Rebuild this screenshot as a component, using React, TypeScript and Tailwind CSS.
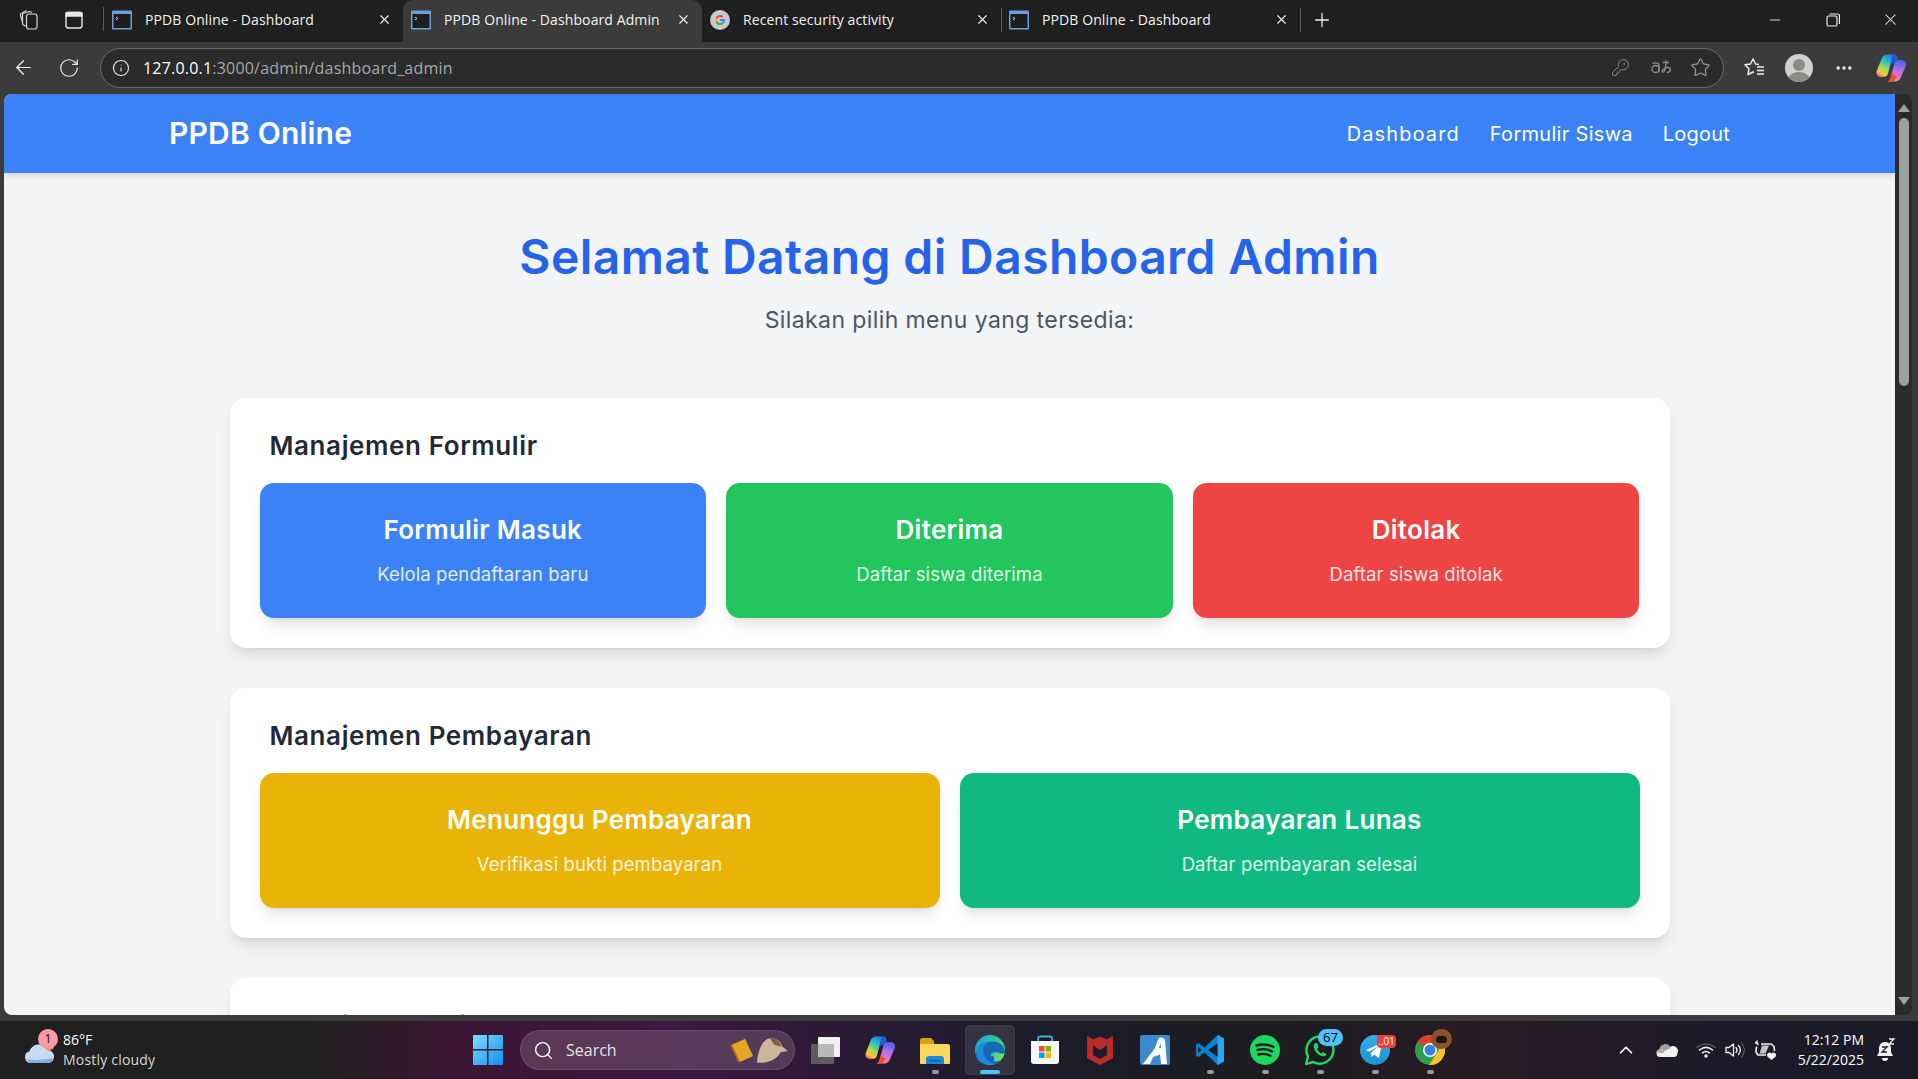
import React from 'react';
import { ArrowLeft, RotateCw, Info, X, Plus, Minus, Star, KeyRound, Search, ChevronUp, MoreHorizontal } from 'lucide-react';

const UI_FONT = { fontFamily: '"Open Sans", "Noto Sans", sans-serif' };

function TerminalFavicon() {
  return (
    <svg width="20" height="20" viewBox="0 0 20 20" className="shrink-0">
      <rect x="0" y="0.5" width="20" height="19" rx="1" fill="#6a9fd8" />
      <rect x="1.5" y="4" width="17" height="14" fill="#1d1d1d" />
      <path d="M4 7l2 1.5L4 10" stroke="#ddd" strokeWidth="1" fill="none" />
    </svg>
  );
}

function GoogleFavicon() {
  return (
    <svg width="20" height="20" viewBox="0 0 20 20" className="shrink-0">
      <circle cx="10" cy="10" r="10" fill="#c9c9c9" />
      <path d="M10 5a5 5 0 0 1 3.4 1.3l-1.4 1.4A3 3 0 0 0 7.2 9L5.6 7.6A5 5 0 0 1 10 5z" fill="#e94235" />
      <path d="M5.6 7.6L7.2 9a3 3 0 0 0 0 2L5.6 12.4a5 5 0 0 1 0-4.8z" fill="#f9bb05" />
      <path d="M5.6 12.4L7.2 11a3 3 0 0 0 4.6 1.5l1.5 1.3A5 5 0 0 1 5.6 12.4z" fill="#34a853" />
      <path d="M15 10c0 1.6-.6 2.9-1.7 3.8l-1.5-1.3c.5-.4.8-.9 1-1.500H10V9h4.9c.1.3.1.7.1 1z" fill="#4285f4" />
    </svg>
  );
}

function CopilotIcon({ size = 30, id = 'cp' }: { size?: number; id?: string }) {
  return (
    <svg width={size} height={size} viewBox="0 0 30 30">
      <defs>
        <linearGradient id={`${id}A`} x1="0.7" y1="0" x2="0.2" y2="1">
          <stop offset="0" stopColor="#1a7fe8" />
          <stop offset="0.35" stopColor="#2cc7c0" />
          <stop offset="0.65" stopColor="#b5d94a" />
          <stop offset="0.85" stopColor="#f7c53c" />
          <stop offset="1" stopColor="#ee5f9a" />
        </linearGradient>
        <linearGradient id={`${id}B`} x1="0.6" y1="0" x2="0.4" y2="1">
          <stop offset="0" stopColor="#4a63ea" />
          <stop offset="0.4" stopColor="#a86ee8" />
          <stop offset="0.8" stopColor="#ee78c8" />
          <stop offset="1" stopColor="#f6a06a" />
        </linearGradient>
      </defs>
      <path d="M11 1.500h8.500c-2 .5-3 2-3.500 4l-4 15c-.7 2.600-2.400 3.500-4.500 3.500H5c-3.500 0-5.300-2.700-4.300-6L5.500 6C6.500 3 8.500 1.500 11 1.500z" fill={`url(#${id}A)`} />
      <path d="M19 28.500h-8c2 0 3-1.500 3.500-3.500l4-14.500c.7-2.600 2.400-3.500 4.500-3.500h2.500c3.500 0 5.300 2.700 4.300 6L25 24c-1 3-3.500 4.500-6 4.500z" fill={`url(#${id}B)`} />
      <path d="M19.500 1.500c-2 .5-3 2-3.500 4l-2.500 9c.5-2 1.500-3.500 3.500-4.500l2-.5c.5-2 1.800-2 2.700-2-.2-3-.7-6-2.200-6z" fill="#2456d8" />
      <path d="M11 28.500c2 0 3-1.500 3.500-3.500l1.500-6c1 2.500 2.500 4 5 4l-1.500 3c-.8 1.500-2 2.500-3.500 2.500z" fill="#ef4d36" />
    </svg>
  );
}

function WindowsLogo() {
  return (
    <svg width="30" height="30" viewBox="0 0 30 30">
      <defs>
        <linearGradient id="winG" x1="0" y1="0" x2="1" y2="1">
          <stop offset="0" stopColor="#7fdcff" />
          <stop offset="1" stopColor="#0f8ff0" />
        </linearGradient>
      </defs>
      <path d="M0 1a1 1 0 0 1 1-1h13v14H0zM15.500 0H29a1 1 0 0 1 1 1v13H15.500zM0 15.500h14V30H1a1 1 0 0 1-1-1zM15.500 15.500H30V29a1 1 0 0 1-1 1H15.500z" fill="url(#winG)" />
    </svg>
  );
}

function TaskViewIcon() {
  return (
    <svg width="30" height="30" viewBox="0 0 30 30">
      <rect x="1" y="9" width="23" height="20" rx="1" fill="#5c5c5c" />
      <rect x="8" y="2" width="22" height="20" rx="1" fill="#f2f2f2" />
      <rect x="8" y="9" width="16" height="13" fill="#b8b8b8" />
    </svg>
  );
}

function ExplorerIcon() {
  return (
    <svg width="30" height="30" viewBox="0 0 30 30">
      <path d="M0 5a2 2 0 0 1 2-2h9l3 3v4H0z" fill="#d9a00f" />
      <path d="M0 9h28a2 2 0 0 1 2 2v17a1 1 0 0 1-1 1H1a1 1 0 0 1-1-1z" fill="#fdd75a" />
      <path d="M6 29v-5a3 3 0 0 1 3-3h12a3 3 0 0 1 3 3v5z" fill="#1e88d8" />
      <rect x="9" y="25" width="12" height="1.5" fill="#0c5fa6" />
    </svg>
  );
}

function EdgeIcon() {
  return (
    <svg width="30" height="30" viewBox="0 0 30 30">
      <defs>
        <linearGradient id="edgeA" x1="0" y1="0" x2="1" y2="0.6">
          <stop offset="0" stopColor="#1b9de2" />
          <stop offset="0.6" stopColor="#30c5a0" />
          <stop offset="1" stopColor="#6fe06a" />
        </linearGradient>
      </defs>
      <circle cx="15" cy="15" r="15" fill="url(#edgeA)" />
      <path d="M30 17c-.5-7-6-10.500-12-10.500C9 6.500 3 11 1 18c-2 6 5 12 14 12 5 0 9-2 11-5-3 1.500-6 1.500-8 .5 3-1 1-5-2-5-1-2 3-4 7-3 3 1 5 2 7 0z" fill="#1568b8" />
      <path d="M2 14C4 8 10 6 15 7c-5 1-8 5-7 10 1 6 6 11 12 12-2 1-3 1-5 1C6 30 0 23 2 14z" fill="#1b8be0" />
    </svg>
  );
}

function StoreIcon() {
  return (
    <svg width="30" height="30" viewBox="0 0 30 30">
      <path d="M8 8V3.500a2 2 0 0 1 2-2h10a2 2 0 0 1 2 2V8" fill="none" stroke="#2eb6ea" strokeWidth="1.8" />
      <path d="M1 6h28v20a3 3 0 0 1-3 3H4a3 3 0 0 1-3-3z" fill="#f7f7f7" />
      <rect x="9" y="11" width="5.5" height="5.5" fill="#f25022" />
      <rect x="15.5" y="11" width="5.5" height="5.5" fill="#7fba00" />
      <rect x="9" y="17.5" width="5.5" height="5.5" fill="#00a4ef" />
      <rect x="15.5" y="17.5" width="5.5" height="5.5" fill="#ffb900" />
    </svg>
  );
}

function McAfeeIcon() {
  return (
    <svg width="30" height="30" viewBox="0 0 30 30">
      <path d="M2 1l6.500 3.500L15 1.500l6.500 3L28 1v22l-13 7-13-7zM8 10.500V20l7 4 7-4v-9.500L15 15z" fill="#b92c29" fillRule="evenodd" />
    </svg>
  );
}

function AppAIcon() {
  return (
    <svg width="30" height="30" viewBox="0 0 30 30">
      <rect width="30" height="30" rx="2" fill="#3b8acb" />
      <path d="M3 29l9-12 3-4c1-3 2-7 4-10 3-1 5 0 6 2l2 24h-7l-1-9-6 2-3 7z" fill="#fff" />
      <path d="M19 13l1.500-5 .5 5zM17 22l3-3 1 10h-3z" fill="#3b8acb" />
    </svg>
  );
}

function VscodeIcon() {
  return (
    <svg width="30" height="30" viewBox="0 0 30 30">
      <path d="M29 3.500L22.500 0 9.500 12.500 3.500 8 1 9.500v11L3.500 22l6-4.500L22.500 30l6.500-3.500z" fill="#0b7fcc" />
      <path d="M22.500 0L29 3.500v23L22.500 30z" fill="#2aa5f0" />
      <path d="M22.500 8.500L13 15l9.500 6.500z" fill="#1c1c20" />
      <path d="M3 12l3.500 3L3 18z" fill="#1c1c20" />
    </svg>
  );
}

function SpotifyIcon() {
  return (
    <svg width="30" height="30" viewBox="0 0 30 30">
      <circle cx="15" cy="15" r="15" fill="#1ed760" />
      <path d="M6.500 10.500c6-1.800 12-1.200 17 1.500M7.500 15c5-1.400 10.500-.8 14.500 1.500M8.500 19.500c4-1 8.500-.7 12 1.200" fill="none" stroke="#1b1b1f" strokeWidth="2.4" strokeLinecap="round" />
    </svg>
  );
}

function WhatsappIcon() {
  return (
    <svg width="30" height="30" viewBox="0 0 30 30">
      <path d="M1 29l2-7.500A13.500 13.500 0 1 1 8.500 27z" fill="none" stroke="#25d366" strokeWidth="2.4" strokeLinejoin="round" />
      <path d="M10.500 8c-2 1-2.500 3.500-1 6.500 1.500 3 4 5.500 7 6.500 2.500.8 4.500 0 5-2l-3.500-2-1.500 1.500c-2-.8-3.500-2.500-4.500-4.500L13.500 12l-1.500-4z" fill="#25d366" />
    </svg>
  );
}

function TelegramIcon() {
  return (
    <svg width="30" height="30" viewBox="0 0 30 30">
      <defs>
        <linearGradient id="tgG" x1="0.5" y1="0" x2="0.5" y2="1">
          <stop offset="0" stopColor="#38aee8" />
          <stop offset="1" stopColor="#1c8fd0" />
        </linearGradient>
      </defs>
      <circle cx="15" cy="15" r="15" fill="url(#tgG)" />
      <path d="M6 15l16-7-3 15-5-3.500-2.500 2.500-.5-4.500 7-6-9 5z" fill="#fff" />
    </svg>
  );
}

function ChromeIcon() {
  return (
    <svg width="30" height="30" viewBox="0 0 30 30">
      <circle cx="15" cy="15" r="15" fill="#2f9e4f" />
      <path d="M15 0a15 15 0 0 1 13 7.500H15a7.500 7.500 0 0 0-6.500 3.750L2.500 6.700A15 15 0 0 1 15 0z" fill="#e33b2e" />
      <path d="M28 7.500A15 15 0 0 1 14 30l7.500-11.250A7.500 7.500 0 0 0 21.500 7.500z" fill="#fbc02d" />
      <circle cx="15" cy="15" r="7" fill="#fff" />
      <circle cx="15" cy="15" r="5.500" fill="#3b82e0" />
    </svg>
  );
}

function WeatherIcon() {
  return (
    <svg width="32" height="24" viewBox="0 0 32 24" className="mt-[2px]">
      <rect x="17" y="1" width="13" height="10" rx="4" fill="#f08a24" />
      <path d="M7 24a6 6 0 0 1-1.500-11.800C7 8 11 5 15 5.500c3.500.3 6.500 2.500 7.500 5.500a6.500 6.500 0 0 1 2 13z" fill="#c4dbf7" />
      <path d="M3 20c3 1 8 1.500 12 1s9-1 14-2a6 6 0 0 1-5 5H7a6 6 0 0 1-4-4z" fill="#86aae6" />
    </svg>
  );
}

function OneDriveIcon() {
  return (
    <svg width="22" height="16" viewBox="0 0 22 16">
      <path d="M4 15a3.800 3.800 0 0 1-.5-7.500A6 6 0 0 1 14.500 5 4.800 4.800 0 0 1 21.500 11c0 2.500-1.500 4-3.500 4z" fill="#f2f2f2" />
      <path d="M3.500 7.500A6 6 0 0 1 14.500 5l-1.500 2a5 5 0 0 0-4 1.500A5 5 0 0 0 7 8c-1.300-.8-2.400-.8-3.500-.5z" fill="#9e9e9e" />
      <path d="M13 7a5 5 0 0 0-4 1.500L7 8C5.700 7.200 4.600 7.200 3.500 7.500 1 8 .3 10 .3 11L7 11c2-2 4-3.500 6-4z" fill="#b0b0b0" />
    </svg>
  );
}

function WifiArcsIcon() {
  return (
    <svg width="20" height="16" viewBox="0 0 20 16" fill="none" strokeLinecap="round">
      <path d="M1 5.500C6 1 14 1 19 5.500" stroke="#5e5e66" strokeWidth="1.4" />
      <path d="M3.500 8c4-3.300 9-3.300 13 0" stroke="#f2f2f2" strokeWidth="1.6" />
      <path d="M6.500 10.800c2.200-1.700 4.800-1.700 7 0" stroke="#f2f2f2" strokeWidth="1.6" />
      <circle cx="10" cy="14" r="1.700" fill="#f2f2f2" />
    </svg>
  );
}

function VolumeIcon() {
  return (
    <svg width="21" height="18" viewBox="0 0 21 18" fill="none" strokeLinecap="round">
      <path d="M1 6.500h3L8.500 3v12L4 11.500H1z" stroke="#f2f2f2" strokeWidth="1.3" strokeLinejoin="round" />
      <path d="M11 6.500c1.300 1.500 1.300 3.500 0 5M13.500 4.500c2.300 2.700 2.300 6.300 0 9" stroke="#f2f2f2" strokeWidth="1.3" />
      <path d="M16.500 2c3.500 4.300 3.500 9.700 0 14" stroke="#5e5e66" strokeWidth="1.1" />
    </svg>
  );
}

function SyncBatteryIcon() {
  return (
    <svg width="22" height="22" viewBox="0 0 22 22" fill="none" stroke="#f2f2f2" strokeWidth="1.6">
      <path d="M1.500 7.500L1 13l2 3h2" />
      <path d="M0 4l2-2.500L3.500 6z" fill="#f2f2f2" strokeWidth="0.6" />
      <path d="M6 5h10l3 2.500.5 4.500M5 16h6" />
      <path d="M7 6.500L4.500 14.500h6L14 6.500z" fill="#c6c6c6" stroke="none" />
      <path d="M16.500 21l-4.200-3.600a2.500 2.500 0 0 1 4.200-2.700 2.500 2.500 0 0 1 4.200 2.700z" fill="#f2f2f2" stroke="none" />
    </svg>
  );
}

function QuietBellIcon() {
  return (
    <svg width="20" height="24" viewBox="0 0 20 24">
      <path d="M9 4c-4 0-6 3-6 7v3l-2 4h16l-2-4v-3c0-4-2-7-6-7z" fill="#f2f2f2" />
      <path d="M6 20h6a3 3 0 0 1-6 0z" fill="#f2f2f2" />
      <path d="M6 9h5l-5 5h5" fill="none" stroke="#1b1825" strokeWidth="1.3" />
      <path d="M13 1h5l-5 5h5" fill="none" stroke="#f2f2f2" strokeWidth="1.3" />
    </svg>
  );
}

function WorkspacesIcon() {
  return (
    <svg width="22" height="22" viewBox="0 0 22 22" fill="none" stroke="#d6d6d6" strokeWidth="1.2">
      <rect x="8.500" y="5" width="10.500" height="15" rx="2.500" />
      <path d="M8.500 17.500L5.500 16a2 2 0 0 1-1-2V6a2 2 0 0 1 2-2l5-1.500a2 2 0 0 1 2 1.500" />
      <path d="M4.500 13L2.500 6.500A2 2 0 0 1 4 4L8.500 1.500" />
    </svg>
  );
}

function VerticalTabsIcon() {
  return (
    <svg width="20" height="20" viewBox="0 0 20 20" fill="none" stroke="#e6e6e6" strokeWidth="1.4">
      <rect x="2" y="2.500" width="16" height="15.500" rx="2.500" />
      <path d="M2 3.500a1 1 0 0 1 1-1h14a1 1 0 0 1 1 1V6H2z" fill="#e6e6e6" />
    </svg>
  );
}

function TranslateIcon() {
  return (
    <svg width="22" height="20" viewBox="0 0 22 20" fill="none" stroke="#8f8f8f" strokeWidth="1.3">
      <circle cx="5.500" cy="11" r="3.500" />
      <path d="M2.500 5.500c2-1 6-1 6.500 1.500v7.500" />
      <path d="M13 4.500h6M16 2.500c0 5-1 9-2 11-1 1.500-2.500.5-1.500-1.500 1-1.500 4-3 6-2.500 2 .5 2.500 3 1 4-.5.5-1.500 1-2.500 1" />
    </svg>
  );
}

function FavoritesIcon() {
  return (
    <svg width="22" height="22" viewBox="0 0 22 22" fill="none" stroke="#f0f0f0" strokeWidth="1.4" strokeLinejoin="round">
      <path d="M15 7.500l-3.500-.5L9 2 6.500 7 1 7.800l4 3.900L4 17.500 9 15l1 .5" />
      <path d="M13 10h7M13 13.500h7M13 17h7" />
    </svg>
  );
}

function ProfileIcon() {
  return (
    <svg width="28" height="28" viewBox="0 0 28 28">
      <clipPath id="avatarClip">
        <circle cx="14" cy="14" r="14" />
      </clipPath>
      <g clipPath="url(#avatarClip)">
        <rect width="28" height="28" fill="#d2d1cd" />
        <circle cx="14" cy="11" r="6" fill="#8c8b87" />
        <ellipse cx="14" cy="26" rx="11" ry="8" fill="#8c8b87" />
      </g>
    </svg>
  );
}

const tabs = [
  { title: 'PPDB Online - Dashboard', icon: <TerminalFavicon />, active: false, divider: false },
  { title: 'PPDB Online - Dashboard Admin', icon: <TerminalFavicon />, active: true, divider: false },
  { title: 'Recent security activity', icon: <GoogleFavicon />, active: false, divider: true },
  { title: 'PPDB Online - Dashboard', icon: <TerminalFavicon />, active: false, divider: true },
];

function BrowserTab({ title, icon, active, divider }: { title: string; icon: React.ReactNode; active: boolean; divider: boolean }) {
  return (
    <div className={`relative flex h-[42px] w-[299px] shrink-0 items-center pb-[3px] pl-[8px] pr-[11px] ${active ? 'rounded-t-[10px] bg-[#3b3b3b]' : ''}`}>
      {icon}
      <span className="ml-[13px] flex-1 truncate text-[14px] tracking-[0.1px] text-[#f2f2f2]">{title}</span>
      <X size={15} className="text-[#f2f2f2]" strokeWidth={1.8} />
      {divider && <div className="absolute right-[-1px] top-[8px] h-[24px] w-px bg-[#5a5a5a]" />}
    </div>
  );
}

function TabStrip() {
  return (
    <div className="flex h-[42px] shrink-0 items-center bg-[#1f1f1f]">
      <div className="flex w-[103px] shrink-0 items-center pb-[3px] pl-[18px]">
        <WorkspacesIcon />
        <div className="ml-[24px]"><VerticalTabsIcon /></div>
      </div>
      <div className="mb-[4px] h-[24px] w-px bg-[#5a5a5a]" />
      {tabs.map((t, i) => (
        <BrowserTab key={i} {...t} />
      ))}
      <Plus size={22} strokeWidth={1.4} className="mb-[3px] ml-[11px] text-[#f0f0f0]" />
      <div className="ml-auto flex items-center pb-[3px]">
        <div className="flex w-[58px] justify-center"><Minus size={16} strokeWidth={1.3} className="text-[#f0f0f0]" /></div>
        <div className="flex w-[58px] justify-center">
          <svg width="14" height="14" viewBox="0 0 14 14" fill="none" stroke="#f0f0f0" strokeWidth="1.2">
            <rect x="1" y="3" width="10" height="10" rx="1.5" />
            <path d="M3.500 1h8a2 2 0 0 1 2 2v8" />
          </svg>
        </div>
        <div className="flex w-[56px] justify-center"><X size={19} strokeWidth={1.3} className="text-[#f0f0f0]" /></div>
      </div>
    </div>
  );
}

function Toolbar() {
  return (
    <div className="flex h-[52px] shrink-0 items-center bg-[#3b3b3b] pb-[1px]">
      <div className="flex w-[46px] justify-center"><ArrowLeft size={23} strokeWidth={1.3} className="text-[#f0f0f0]" /></div>
      <div className="flex w-[45px] justify-center"><RotateCw size={22} strokeWidth={1.3} className="text-[#f0f0f0]" /></div>
      <div className="ml-[9px] flex h-[40px] w-[1624px] shrink-0 items-center rounded-full border border-[#6a6a6a] bg-[#2b2b2b] pl-[11px] pr-[12px]">
        <Info size={18} strokeWidth={1.5} className="text-[#e8e8e8]" />
        <span className="ml-[13px] text-[16px] tracking-[0.2px] text-white">127.0.0.1<span className="text-[#a8a8a8]">:3000/admin/dashboard_admin</span></span>
        <div className="ml-auto flex items-center gap-[18px]">
          <KeyRound size={19} strokeWidth={1.2} className="mr-[2px] text-[#8f8f8f]" />
          <TranslateIcon />
          <Star size={21} strokeWidth={1.3} className="text-[#9a9a9a]" />
        </div>
      </div>
      <div className="ml-[20px]"><FavoritesIcon /></div>
      <div className="ml-[19px]"><ProfileIcon /></div>
      <MoreHorizontal size={20} strokeWidth={2} className="ml-[21px] text-[#f0f0f0]" />
      <div className="ml-[22px]"><CopilotIcon size={30} id="cpTop" /></div>
    </div>
  );
}

const formCards = [
  { title: 'Formulir Masuk', desc: 'Kelola pendaftaran baru', color: 'bg-[#3b82f6]' },
  { title: 'Diterima', desc: 'Daftar siswa diterima', color: 'bg-[#22c55e]' },
  { title: 'Ditolak', desc: 'Daftar siswa ditolak', color: 'bg-[#ef4444]' },
];

const payCards = [
  { title: 'Menunggu Pembayaran', desc: 'Verifikasi bukti pembayaran', color: 'bg-[#eab308]' },
  { title: 'Pembayaran Lunas', desc: 'Daftar pembayaran selesai', color: 'bg-[#10b981]' },
];

function MenuCard({ title, desc, color }: { title: string; desc: string; color: string }) {
  return (
    <div className={`flex h-[135px] flex-col items-center rounded-[14px] pt-[31px] shadow-lg ${color}`}>
      <h3 className="text-[26px] font-semibold leading-[32px] tracking-[0.3px] text-white">{title}</h3>
      <p className="mt-[15px] text-[18.5px] font-normal leading-[26px] tracking-[0.1px] text-white/85">{desc}</p>
    </div>
  );
}

function Section({ title, children }: { title: string; children: React.ReactNode }) {
  return (
    <section className="mb-[40px] rounded-2xl bg-white px-[30px] pb-[30px] pt-[32px] shadow-lg">
      <h2 className="mb-[21px] pl-[10px] text-[26px] font-semibold leading-[32px] tracking-[0.6px] text-[#1f2937]">{title}</h2>
      {children}
    </section>
  );
}

function Page() {
  return (
    <div className="min-w-0 flex-1 overflow-hidden rounded-bl-[8px] rounded-tl-[8px] bg-[#f3f4f6] font-['Inter',sans-serif]">
      <nav className="flex h-[79px] items-center justify-between bg-[#3b82f6] pl-[165px] pr-[165px] shadow-md">
        <span className="text-[30px] font-semibold tracking-[0.2px] text-white">PPDB Online</span>
        <div className="flex gap-[30px] text-[20px] font-normal text-white">
          <span className="tracking-[1.1px]">Dashboard</span>
          <span className="tracking-[0.3px]">Formulir Siswa</span>
          <span className="tracking-[0.2px]">Logout</span>
        </div>
      </nav>
      <main className="mx-auto w-[1440px]">
        <div className="pt-[60px] text-center">
          <h1 className="text-[48px] font-semibold leading-[48px] tracking-[0.4px] text-[#2563eb]">Selamat Datang di Dashboard Admin</h1>
          <p className="mt-[23px] text-[23px] leading-[32px] tracking-[0.4px] text-[#4b5563]">Silakan pilih menu yang tersedia:</p>
          <div className="h-[62px]" />
        </div>
        <Section title="Manajemen Formulir">
          <div className="grid grid-cols-3 gap-[20px]">
            {formCards.map((c) => (
              <MenuCard key={c.title} {...c} />
            ))}
          </div>
        </Section>
        <Section title="Manajemen Pembayaran">
          <div className="grid grid-cols-2 gap-[20px]">
            {payCards.map((c) => (
              <MenuCard key={c.title} {...c} />
            ))}
          </div>
        </Section>
        <Section title="Manajemen Lainnya">
          <div className="h-[135px]" />
        </Section>
      </main>
    </div>
  );
}

function Scrollbar() {
  return (
    <div className="flex w-[17px] shrink-0 flex-col items-center rounded-r-[8px] bg-[#2b2b2b] py-[10px]">
      <div className="h-0 w-0 border-x-[6px] border-b-[8px] border-x-transparent border-b-[#a0a0a0]" />
      <div className="mt-[6px] h-[268px] w-[10px] rounded-full bg-[#a0a0a0]" />
      <div className="mt-auto h-0 w-0 border-x-[6px] border-t-[8px] border-x-transparent border-t-[#a0a0a0]" />
    </div>
  );
}

const apps = [
  { key: 'task', icon: <TaskViewIcon />, dot: false },
  { key: 'copilot', icon: <CopilotIcon id="cpBar" />, dot: false },
  { key: 'files', icon: <ExplorerIcon />, dot: true },
  { key: 'edge', icon: <EdgeIcon />, dot: false, active: true },
  { key: 'store', icon: <StoreIcon />, dot: false },
  { key: 'mcafee', icon: <McAfeeIcon />, dot: false },
  { key: 'azure', icon: <AppAIcon />, dot: false },
  { key: 'vscode', icon: <VscodeIcon />, dot: true },
  { key: 'spotify', icon: <SpotifyIcon />, dot: true },
  { key: 'whatsapp', icon: <WhatsappIcon />, dot: true, badge: <span className="absolute left-[13px] top-[-6px] flex h-[17px] w-[25px] items-center justify-center rounded-full bg-[#4cc2ff] text-[13px] text-black">67</span> },
  { key: 'telegram', icon: <TelegramIcon />, dot: true, badge: <span className="absolute left-[17px] top-0 flex h-[13px] w-[19px] items-center justify-center rounded-[4px] bg-[#e9403c] text-[10px] text-white">..01</span> },
  {
    key: 'chrome',
    icon: <ChromeIcon />,
    dot: true,
    badge: (
      <span className="absolute left-[16px] top-[-6px] flex h-[20px] w-[21px] items-center justify-center rounded-full bg-[#8a5226]">
        <span className="h-[7px] w-[11px] rounded-full bg-[#1c1512]" />
      </span>
    ),
  },
];

function TaskbarApp({ icon, dot, active, badge }: { icon: React.ReactNode; dot: boolean; active?: boolean; badge?: React.ReactNode }) {
  return (
    <div className="relative flex h-[50px] w-[55px] shrink-0 items-center justify-center">
      {active && <div className="absolute inset-y-0 left-[2.5px] right-[2.5px] rounded-[5px] border border-white/5 bg-white/10" />}
      <div className="relative h-[30px] w-[30px]">
        {icon}
        {badge}
      </div>
      {dot && <div className="absolute bottom-[1px] left-[24px] h-[4px] w-[7px] rounded-full bg-[#9b9b9b]" />}
      {active && <div className="absolute bottom-[1px] left-[17px] h-[4px] w-[20px] rounded-full bg-[#4cc2ff]" />}
    </div>
  );
}

function Taskbar() {
  return (
    <div
      className="flex h-[58px] shrink-0 items-center bg-[linear-gradient(90deg,#202020_0%,#202020_16%,#3d1635_24%,#3c1740_36%,#1d1c2b_52%,#1c1c20_68%,#2a1a26_78%,#1b1a2a_90%,#1a1a28_100%)] text-white"
      style={UI_FONT}
    >
      <div className="relative flex w-[460px] shrink-0 items-center pl-[24px]">
        <WeatherIcon />
        <span className="absolute left-[38px] top-[-1px] flex h-[20px] w-[20px] items-center justify-center rounded-full bg-[#ff99a4] text-[13px] text-[#1c1c1c]">1</span>
        <div className="ml-[7px] flex flex-col leading-[20px]">
          <span className="text-[14px]">86°F</span>
          <span className="text-[14px] tracking-[0.2px] text-[#d6d6d6]">Mostly cloudy</span>
        </div>
      </div>
      <div className="flex w-[55px] shrink-0 justify-center"><WindowsLogo /></div>
      <div className="ml-[5px] flex h-[40px] w-[275px] shrink-0 items-center rounded-full border border-white/10 bg-white/15 pl-[12px] pr-[5px]">
        <Search size={21} strokeWidth={1.6} className="text-white" />
        <span className="ml-[12px] text-[16px] text-[#e3e3e3]">Search</span>
        <div className="ml-auto flex items-center">
          <svg width="26" height="26" viewBox="0 0 26 26">
            <path d="M1 8l15-6 8 17-15 6z" fill="#a9641c" />
            <path d="M3 8l13-6 8 17-13 6z" fill="#e7a528" />
          </svg>
          <svg width="34" height="32" viewBox="0 0 32 30">
            <path d="M2 27c0-8 4-22 12-23 6-1 10 3 12 8l5 4-7 1c-2 5-10 11-22 10z" fill="#cdb59c" />
            <path d="M14 4c5-1 9 3 11 8l-7-2z" fill="#7f5a3a" />
          </svg>
        </div>
      </div>
      <div className="ml-[2.5px] flex shrink-0">
        {apps.map(({ key, ...a }) => (
          <TaskbarApp key={key} {...a} />
        ))}
      </div>
      <div className="ml-auto flex shrink-0 items-center pr-[22px]">
        <ChevronUp size={22} strokeWidth={1.8} className="text-white" />
        <div className="ml-[19px]"><OneDriveIcon /></div>
        <div className="ml-[18px]"><WifiArcsIcon /></div>
        <div className="ml-[9px]"><VolumeIcon /></div>
        <div className="ml-[9px]"><SyncBatteryIcon /></div>
        <div className="ml-[21px] flex flex-col items-end text-[14px] leading-[20px]">
          <span>12:12 PM</span>
          <span>5/22/2025</span>
        </div>
        <div className="ml-[12px]"><QuietBellIcon /></div>
      </div>
    </div>
  );
}

export default function App() {
  return (
    <div className="flex h-[1079px] w-[1918px] flex-col overflow-hidden bg-[#3b3b3b]">
      <div style={UI_FONT} className="shrink-0">
        <TabStrip />
        <Toolbar />
      </div>
      <div className="flex min-h-0 flex-1 pl-[4px] pr-[6px]">
        <Page />
        <Scrollbar />
      </div>
      <div className="h-[6px] shrink-0" />
      <Taskbar />
    </div>
  );
}
